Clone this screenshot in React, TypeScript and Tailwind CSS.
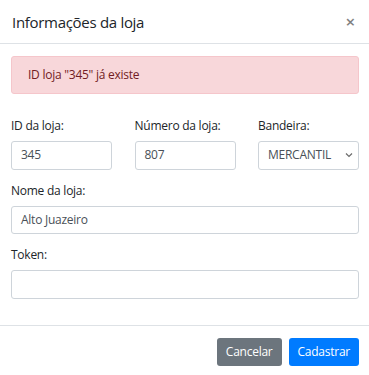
import React from "react";

function Field({ label, value, className = "" }: { label: string; value: string; className?: string }) {
  return (
    <div className={`flex flex-col ${className}`}>
      <label className="mb-[6px] leading-[18px] text-[#212529]">{label}</label>
      <div className="h-[28.5px] px-[9px] flex items-center border border-[#ced4da] rounded-[3px] bg-white text-[#495057]">
        {value}
      </div>
    </div>
  );
}

export default function App() {
  return (
    <div
      className="w-[369px] h-[375px] overflow-hidden bg-white text-[12px] tracking-[-0.25px] text-[#212529]"
      style={{ fontFamily: '"Open Sans", "Noto Sans", sans-serif' }}
    >
      {/* header */}
      <div className="h-[44px] flex items-center justify-between pl-[12px] pr-[14px] border-b border-[#dee2e6]">
        <h5 className="text-[15px] font-medium leading-[22px] tracking-[-0.3px]">Informações da loja</h5>
        <button className="text-[17px] font-semibold leading-none text-black opacity-50 -mt-[1px]">×</button>
      </div>

      {/* body */}
      <div className="pl-[11px] pr-[10px] pt-[12px]">
        <div className="h-[38px] flex items-center px-[16px] bg-[#f8d7da] border border-[#f5c6cb] rounded-[3px] text-[#721c24]">
          ID loja "345" já existe
        </div>

        <div className="mt-[23px] grid grid-cols-3 gap-x-[22.5px]">
          <Field label="ID da loja:" value="345" />
          <Field label="Número da loja:" value="807" />
          <div className="flex flex-col">
            <label className="mb-[6px] leading-[18px] text-[#212529]">Bandeira:</label>
            <div className="h-[28.5px] pl-[9px] pr-[4px] flex items-center justify-between border border-[#ced4da] rounded-[3px] bg-white text-[#495057]">
              <span>MERCANTIL</span>
              <svg width="10" height="10" viewBox="0 0 10 10" fill="none">
                <path d="M2 3.5 L5 6.5 L8 3.5" stroke="#6b6b6b" strokeWidth="1.2" />
              </svg>
            </div>
          </div>
        </div>

        <Field label="Nome da loja:" value="Alto Juazeiro" className="mt-[12px]" />
        <Field label="Token:" value="" className="mt-[12px]" />
      </div>

      {/* footer */}
      <div className="mt-[26px] border-t border-[#dee2e6] flex justify-end gap-[7px] pt-[12px] pr-[10px]">
        <button className="h-[28.5px] px-[9px] rounded-[3px] bg-[#6c757d] text-white">Cancelar</button>
        <button className="h-[28.5px] px-[9px] rounded-[3px] bg-[#007bff] text-white">Cadastrar</button>
      </div>
    </div>
  );
}
